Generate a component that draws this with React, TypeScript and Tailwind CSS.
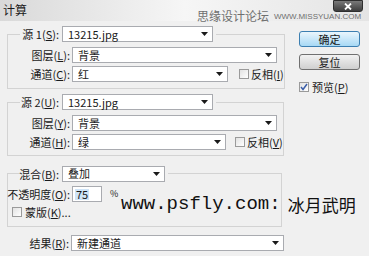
import React from 'react';

const cjk = '"Noto Sans CJK SC", "Liberation Sans", sans-serif';

const Arrow: React.FC = () => (
  <svg width="7" height="4" viewBox="0 0 7 4" className="shrink-0">
    <path d="M0 0h7L3.5 4z" fill="#1a1a1a" />
  </svg>
);

const Select: React.FC<{ value: string; w: string }> = ({ value, w }) => (
  <div className={`${w} h-[16px] shrink-0 bg-white border border-[#a9abb0] flex items-center justify-between pl-[5px] pr-[4px] text-[11px] leading-none`}>
    <span>{value}</span>
    <Arrow />
  </div>
);

const Check: React.FC<{ checked?: boolean }> = ({ checked }) => (
  <div className="w-[10px] h-[10px] bg-gradient-to-br from-[#e2e2e2] to-white border border-[#9a9a9a] flex items-center justify-center shrink-0">
    {checked && (
      <svg width="8" height="8" viewBox="0 0 8 8">
        <path d="M1 4l2 2.5L7 1" stroke="#3b5ea8" strokeWidth="1.5" fill="none" />
      </svg>
    )}
  </div>
);

const Label: React.FC<{ text: string; k: string; w?: string }> = ({ text, k, w = 'w-[62px]' }) => (
  <div className={`${w} h-[16px] flex items-center justify-end shrink-0`}>
    <span className="whitespace-nowrap leading-[14px]">
      {text}(<u>{k}</u>):
    </span>
  </div>
);

const SourceGroup: React.FC<{ n: string; k: string; layerK: string; chK: string; chan: string; invK: string; chW: string; gap: string; pb: string }> = ({ n, k, layerK, chK, chan, invK, chW, gap, pb }) => (
  <fieldset className={`border border-[#d3d3d3] w-[275px] ${pb}`}>
    <legend className="ml-[12px] px-[3px]">
      <div className="flex items-center gap-[3px] h-[16px]">
        <Label text={`源 ${n}`} k={k} w="w-[36px]" />
        <Select value="13215.jpg" w="w-[151px]" />
      </div>
    </legend>
    <div className="flex flex-col gap-[3px] mt-[5px]">
      <div className="flex items-center gap-[2px] h-[16px]">
        <Label text="图层" k={layerK} />
        <Select value="背景" w="w-[205px]" />
      </div>
      <div className="flex items-center gap-[2px] h-[16px]">
        <Label text="通道" k={chK} />
        <Select value={chan} w={chW} />
        <div className={`flex items-center gap-[2px] ${gap}`}>
          <Check />
          <span className="whitespace-nowrap">反相(<u>{invK}</u>)</span>
        </div>
      </div>
    </div>
  </fieldset>
);

const App: React.FC = () => {
  return (
    <div className="relative w-[369px] h-[256px] bg-[#f0f0f0] overflow-hidden text-[11px] leading-[14px] text-[#1a1a1a]" style={{ fontFamily: cjk }}>
      {/* title bar */}
      <div className="h-[21px] bg-gradient-to-r from-[#d9d9d9] via-[#f6f6f6] to-[#e4e4e4] flex items-start justify-between pl-[3px]">
        <span className="mt-[3px] text-[12px] leading-[14px]">计算</span>
        <div className="mr-[6px] w-[30px] h-[12px] rounded-b-[3px] bg-gradient-to-b from-[#7a7a7a] to-[#3e3e3e] border border-[#2e2e2e] flex items-center justify-center">
          <svg width="8" height="7" viewBox="0 0 8 7">
            <path d="M1 0.5l6 6M7 0.5l-6 6" stroke="white" strokeWidth="1.8" />
          </svg>
        </div>
      </div>

      <div className="flex pl-[7px] pt-[5px]">
        {/* left column */}
        <div className="w-[280px] flex flex-col">
          <SourceGroup n="1" k="S" layerK="L" chK="C" chan="红" invK="I" chW="w-[156px]" gap="ml-[9px]" pb="pb-[6px]" />
          <div className="h-[5px]" />
          <SourceGroup n="2" k="U" layerK="Y" chK="H" chan="绿" invK="V" chW="w-[154px]" gap="ml-[7px]" pb="pb-[5px]" />

          <fieldset className="border border-[#d3d3d3] w-[275px] pb-[8px] mt-[10px]">
            <legend className="ml-[12px] px-[3px]">
              <div className="flex items-center gap-[3px] h-[15px]">
                <Label text="混合" k="B" w="w-[36px]" />
                <Select value="叠加" w="w-[103px]" />
              </div>
            </legend>
            <div className="flex flex-col mt-[5px]">
              <div className="flex items-center gap-[2px] h-[16px]">
                <Label text="不透明度" k="O" />
                <div className="w-[30px] h-[16px] bg-white border border-[#a9abb0] flex items-center pl-[2px]">
                  <span className="bg-[#cfe4f7] px-[1px] leading-none">75</span>
                </div>
                <span className="ml-[6px] text-[9px] -mt-[1px]">%</span>
              </div>
              <div className="flex items-center gap-[3px] ml-[4px] mt-[4px] h-[12px]">
                <Check />
                <span>蒙版(<u>K</u>)...</span>
              </div>
            </div>
          </fieldset>

          <div className="flex items-center gap-[2px] mt-[8px] h-[16px]">
            <Label text="结果" k="R" />
            <Select value="新建通道" w="w-[213px]" />
          </div>
        </div>

        {/* right column */}
        <div className="ml-[12px] mt-[5px] flex flex-col">
          <button className="w-[61px] h-[16px] rounded-[3px] border border-[#3c7fb1] bg-gradient-to-b from-[#eaf6fd] to-[#a7d9f5] text-[11px] leading-none flex items-center justify-center">
            确定
          </button>
          <button className="w-[61px] h-[16px] mt-[7px] rounded-[3px] border border-[#707070] bg-gradient-to-b from-[#f2f2f2] to-[#cfcfcf] text-[11px] leading-none flex items-center justify-center">
            复位
          </button>
          <div className="flex items-center gap-[3px] mt-[10px]">
            <Check checked />
            <span>预览(<u>P</u>)</span>
          </div>
        </div>
      </div>

      {/* watermarks */}
      <div className="absolute left-[197px] top-[10px] flex items-end gap-[5px] text-[#6f6f6f] whitespace-nowrap">
        <span className="text-[12px] leading-none">思缘设计论坛</span>
        <span className="text-[8px] leading-none mb-[1px]" style={{ fontFamily: '"Liberation Sans", sans-serif' }}>WWW.MISSYUAN.COM</span>
      </div>
      <div className="absolute left-[121px] top-[195px] leading-none text-[#111] whitespace-nowrap flex items-center gap-[7px]">
        <span className="text-[19px]" style={{ fontFamily: '"Liberation Mono", monospace' }}>www.psfly.com:</span>
        <span className="text-[17px]">冰月武明</span>
      </div>
    </div>
  );
};

export default App;
